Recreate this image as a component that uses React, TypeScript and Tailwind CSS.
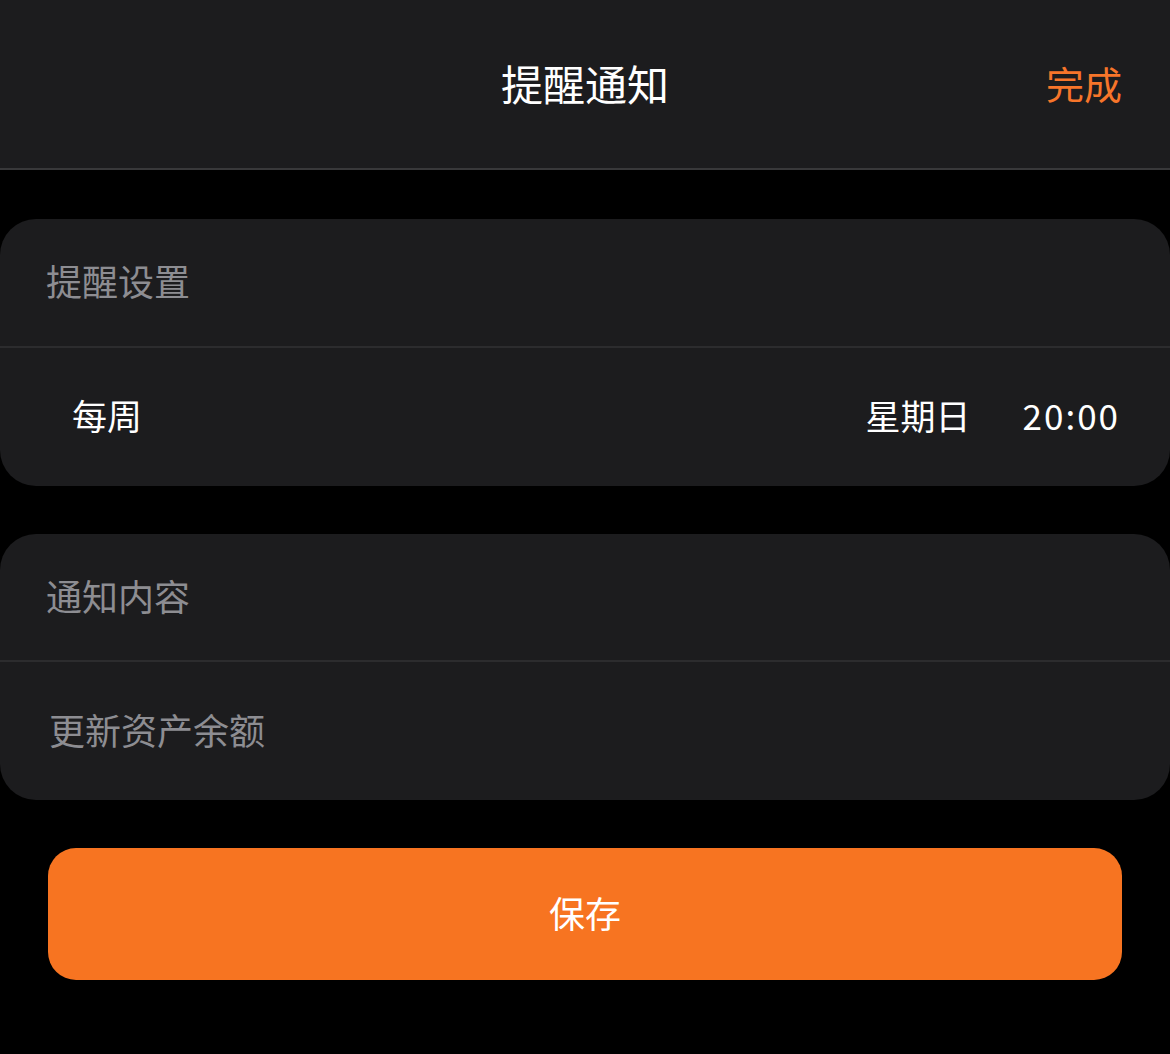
import React from "react";

const FONT = { fontFamily: '"Noto Sans CJK SC", "Noto Sans", sans-serif' };

export default function App() {
  return (
    <div className="min-h-[1054px] w-[1170px] bg-black text-white" style={FONT}>
      {/* Header */}
      <div className="relative flex h-[170px] items-center justify-center border-b-2 border-[#38383a] bg-[#1c1c1e]">
        <h1 className="pb-[2px] text-[42px] leading-none font-normal">提醒通知</h1>
        <button className="absolute right-[48px] top-1/2 -translate-y-1/2 pb-[2px] text-[38px] leading-none text-[#f7752a]">完成</button>
      </div>

      <div className="flex flex-col gap-[48px] pt-[49px]">
        {/* Reminder settings */}
        <div className="rounded-[36px] bg-[#1c1c1e]">
          <div className="flex h-[129px] items-center border-b-2 border-[#2c2c2e] px-[46px] pb-[5px] text-[36px] leading-none text-[#8d8d92]">
            提醒设置
          </div>
          <div className="flex h-[138px] items-center justify-between pl-[72px] pr-[50px] pb-[5px] text-[35px] leading-none">
            <span>每周</span>
            <div className="flex items-center gap-[52px]">
              <span>星期日</span>
              <span className="tracking-[2px]">20:00</span>
            </div>
          </div>
        </div>

        {/* Notification content */}
        <div className="rounded-[36px] bg-[#1c1c1e]">
          <div className="flex h-[128px] items-center border-b-2 border-[#2c2c2e] px-[46px] pb-[4px] text-[36px] leading-none text-[#8d8d92]">
            通知内容
          </div>
          <div className="flex h-[138px] items-center px-[49px] pb-[4px] text-[36px] leading-none text-[#8d8d92]">
            更新资产余额
          </div>
        </div>

        <div className="px-[48px]">
          <button className="flex h-[132px] w-full items-center justify-center rounded-[28px] bg-[#f77421] pb-[4px] text-[36px] leading-none text-white">
            保存
          </button>
        </div>
      </div>
    </div>
  );
}
